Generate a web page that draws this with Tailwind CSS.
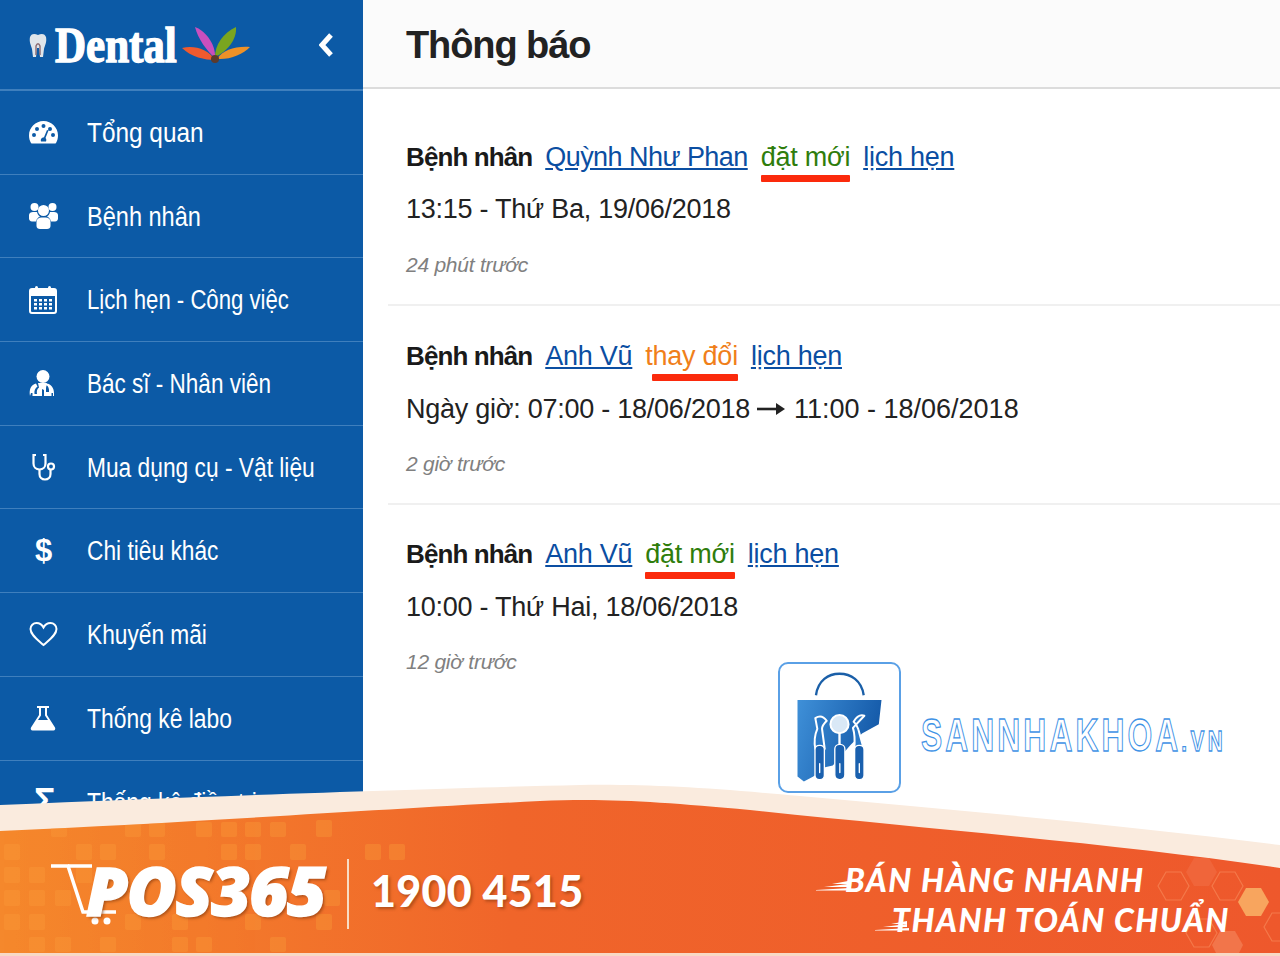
<!DOCTYPE html>
<html lang="vi">
<head>
<meta charset="utf-8">
<title>Thông báo</title>
<script src="https://cdn.jsdelivr.net/npm/@tailwindcss/browser@4"></script>
</head>
<body class="font-['Liberation_Sans',Arial,sans-serif]">
<div class="relative flex h-[956px] w-[1280px] overflow-hidden bg-white">
  <aside class="w-[363px] shrink-0 bg-[#0c5aa6] text-white">
    <div class="flex h-[91px] items-center border-b-2 border-[#3f7fbd] pl-[28px] pr-[28px]">
      <svg class="h-[28px] w-[20px]" viewBox="0 0 20 28"><path d="M2 6c2-4 5-3 8-2 3-1 6-2 8 2 1 5-1 8-2 12l-1 8h-3l-1-9H9l-1 9H5l-1-8C3 14 1 11 2 6z" fill="#dfe5ea"/><path d="M8 24v-9c1-3 3-3 4 0v9" fill="none" stroke="#8a6a70" stroke-width="1.400"/></svg>
      <span class="ml-[7px] inline-block w-[120px] origin-left scale-x-[0.86] whitespace-nowrap font-['Liberation_Serif',serif] text-[50px] font-bold leading-none [-webkit-text-stroke:1.400px_white]">Dental</span>
      <svg class="ml-[4px] h-[44px] w-[72px]" viewBox="0 0 72 44">
        <path d="M36 37C26 37 12 34 3 25c12-3 26 1 33 12z" fill="#ef5a2e"/>
        <path d="M36 35C28 28 19 16 16 4c9 3 21 16 20 31z" fill="#c94fbe"/>
        <path d="M36 34C36 22 44 10 57 4c1 12-8 24-21 30z" fill="#7aa51f"/>
        <path d="M38 36C44 27 56 23 71 24c-7 7-20 13-33 12z" fill="#ee9127"/>
        <circle cx="36" cy="36" r="4" fill="#5c3a2c"/>
      </svg>
      <svg class="ml-auto h-[26px] w-[16px]" viewBox="0 0 16 26"><path d="M12 3 3 13l9 10" fill="none" stroke="white" stroke-width="5"/></svg>
    </div>
    <nav class="text-[27px] leading-none">
      <a class="flex h-[83.7px] items-center border-b border-[#3f7fbd] pl-[29px]"><span class="flex w-[58px] shrink-0"><svg class="h-[26px] w-[29px]" viewBox="0 0 29 26"><path fill-rule="evenodd" d="M14.500 2C6.500 2 0 8.500 0 16.500c0 2.700.7 5.200 2 7.400.3.500.8.600 1.300.600h22.400c.5 0 1-.1 1.300-.6 1.300-2.200 2-4.700 2-7.400C29 8.500 22.500 2 14.500 2zm0 3a2 2 0 1 1 0 4 2 2 0 0 1 0-4zM8 8a2 2 0 1 1 0 4 2 2 0 0 1 0-4zm13 0a2 2 0 1 1 0 4 2 2 0 0 1 0-4zM5 14a2 2 0 1 1 0 4 2 2 0 0 1 0-4zm19 0a2 2 0 1 1 0 4 2 2 0 0 1 0-4zm-6-3 1.500.6-3 7.400c1 1 1 2.300.5 3.500h-5c-.8-2 .3-4 3-4.200z" fill="white"/></svg></span><span class="origin-left scale-x-[0.903] whitespace-nowrap pt-[2px]">Tổng quan</span></a>
      <a class="flex h-[83.7px] items-center border-b border-[#3f7fbd] pl-[29px]"><span class="flex w-[58px] shrink-0"><svg class="h-[30px] w-[29px]" viewBox="0 0 29 30" fill="white"><circle cx="5.500" cy="6" r="4"/><circle cx="23.500" cy="6" r="4"/><circle cx="14.500" cy="9.500" r="5.500"/><path d="M0 14c0-2 2-3 4-3h4c.500 2 1.500 3.500 3 4.500-2 1-3.500 2.500-4 5H3c-2 0-3-1.500-3-3zM29 14c0-2-2-3-4-3h-4c-.5 2-1.500 3.500-3 4.500 2 1 3.500 2.500 4 5h4c2 0 3-1.500 3-3zM7.500 21c0-3 2-4.500 5-4.500h4c3 0 5 1.500 5 4.500v4c0 2-1.500 3-3.500 3h-7c-2 0-3.500-1-3.500-3z"/></svg></span><span class="origin-left scale-x-[0.872] whitespace-nowrap pt-[2px]">Bệnh nhân</span></a>
      <a class="flex h-[83.7px] items-center border-b border-[#3f7fbd] pl-[29px]"><span class="flex w-[58px] shrink-0"><svg class="h-[29px] w-[28px]" viewBox="0 0 28 29"><rect x="1" y="4" width="26" height="24" rx="2" fill="none" stroke="white" stroke-width="2"/><path d="M1 5h26v6H1z" fill="white"/><rect x="6" y="1" width="3" height="6" rx="1.500" fill="white"/><rect x="19" y="1" width="3" height="6" rx="1.500" fill="white"/><path d="M5 14h3v2.500H5zM10 14h3v2.500h-3zM15 14h3v2.500h-3zM20 14h3v2.500h-3zM5 18h3v2.500H5zM10 18h3v2.500h-3zM15 18h3v2.500h-3zM20 18h3v2.500h-3zM5 22h3v2.500H5zM10 22h3v2.500h-3zM15 22h3v2.500h-3zM20 22h3v2.500h-3z" fill="white"/></svg></span><span class="origin-left scale-x-[0.82] whitespace-nowrap pt-[2px]">Lịch hẹn - Công việc</span></a>
      <a class="flex h-[83.7px] items-center border-b border-[#3f7fbd] pl-[29px]"><span class="flex w-[58px] shrink-0"><svg class="h-[27px] w-[27px]" viewBox="0 0 27 27" fill="white"><circle cx="14" cy="6.500" r="6.500"/><path d="M1 26c-1-6 .5-11 6-12.500l1.500 3C6 18 5 21 5.500 24H8c-.5-3 0-5 2-6.500L9 13h9l-1 5v4h3c.3-3-.5-6-3-7l1.500-1.500c5 1.500 7 6 6.500 12.500H24v-3h-1.500v3H15V20l-2-1v7H3.500v-3H2z"/></svg></span><span class="origin-left scale-x-[0.834] whitespace-nowrap pt-[2px]">Bác sĩ - Nhân viên</span></a>
      <a class="flex h-[83.7px] items-center border-b border-[#3f7fbd] pl-[29px]"><span class="flex w-[58px] shrink-0 pl-[2px]"><svg class="h-[28px] w-[25px]" viewBox="0 0 25 28" fill="none" stroke="white" stroke-width="2.200"><path d="M5 2H2.500v8.500c0 3.500 2.500 6 6 6s6-2.500 6-6V2H12"/><path d="M8.500 16.500V21c0 3.200 2.300 5.500 5.500 5.500s5.500-2.300 5.500-5.500v-4"/><circle cx="20" cy="13.500" r="3"/></svg></span><span class="origin-left scale-x-[0.843] whitespace-nowrap pt-[2px]">Mua dụng cụ - Vật liệu</span></a>
      <a class="flex h-[83.7px] items-center border-b border-[#3f7fbd] pl-[29px]"><span class="flex w-[58px] shrink-0 pl-[6px] text-[31px] font-bold leading-none">$</span><span class="origin-left scale-x-[0.842] whitespace-nowrap pt-[2px]">Chi tiêu khác</span></a>
      <a class="flex h-[83.7px] items-center border-b border-[#3f7fbd] pl-[29px]"><span class="flex w-[58px] shrink-0"><svg class="h-[26px] w-[29px]" viewBox="0 0 29 26"><path d="M14.500 24C9 19 1.500 14 1.500 8c0-3.500 2.800-6 6-6 3 0 5.500 1.700 7 4.500C16 3.700 18.500 2 21.500 2c3.200 0 6 2.500 6 6 0 6-7.500 11-13 16z" fill="none" stroke="white" stroke-width="2"/></svg></span><span class="origin-left scale-x-[0.841] whitespace-nowrap pt-[2px]">Khuyến mãi</span></a>
      <a class="flex h-[83.7px] items-center border-b border-[#3f7fbd] pl-[29px]"><span class="flex w-[58px] shrink-0 pl-[1px]"><svg class="h-[26px] w-[26px]" viewBox="0 0 26 26"><path d="M7 1h12v2h-2v7l8 12.500c.7 1.500 0 3-1.500 3h-21c-1.500 0-2.200-1.500-1.500-3L9 10V3H7z" fill="white"/><path d="M11 3h4v7.600L18 15H8l3-4.400z" fill="#0c5aa6"/></svg></span><span class="origin-left scale-x-[0.847] whitespace-nowrap pt-[2px]">Thống kê labo</span></a>
      <a class="flex h-[83.7px] items-center pl-[29px]"><span class="flex w-[58px] shrink-0 pl-[5px] text-[36px] font-bold leading-none">Σ</span><span class="origin-left scale-x-[0.845] whitespace-nowrap pt-[2px]">Thống kê điều trị</span></a>
    </nav>
  </aside>

  <main class="min-w-0 flex-1">
    <header class="flex h-[89px] items-center border-b-2 border-[#dcdcdc] bg-[#fbfbfb] pl-[43px] pt-[2px]">
      <h1 class="text-[38px] font-bold leading-none tracking-[-1.1px] text-[#222222]">Thông báo</h1>
    </header>
    <div class="ml-[25px] text-[27px] leading-[40px] tracking-[-0.25px] text-[#222222]">
      <section class="h-[217px] border-b-2 border-[#f0f0f0] pl-[18px] pt-[48px]">
        <div class="flex gap-[13px]"><b class="text-[26px] font-bold tracking-[-0.9px] text-[#1a1a1a]">Bệnh nhân</b><a class="tracking-[-0.55px] text-[#0b4ea2] underline">Quỳnh Như Phan</a><span class="relative text-[#2f7d0c]">đặt mới<i class="absolute bottom-[-5px] left-0 h-[7px] w-full rounded-[1px] bg-[#fb2a0c]"></i></span><a class="text-[#0b4ea2] underline">lịch hẹn</a></div>
        <p class="mt-[12px]">13:15 - Thứ Ba, 19/06/2018</p>
        <p class="mt-[16px] text-[21px] italic tracking-[-0.25px] text-[#808080]">24 phút trước</p>
      </section>
      <section class="h-[199px] border-b-2 border-[#f0f0f0] pl-[18px] pt-[30px]">
        <div class="flex gap-[13px]"><b class="text-[26px] font-bold tracking-[-0.9px] text-[#1a1a1a]">Bệnh nhân</b><a class="text-[#0b4ea2] underline">Anh Vũ</a><span class="relative text-[#f07f1a]">thay đổi<i class="absolute bottom-[-5px] left-[7px] right-0 h-[7px] rounded-[1px] bg-[#fb2a0c]"></i></span><a class="text-[#0b4ea2] underline">lịch hẹn</a></div>
        <p class="mt-[13px] flex items-center whitespace-pre">Ngày giờ: 07:00 - 18/06/2018<svg class="ml-[7px] mr-[9px] h-[14px] w-[28px]" viewBox="0 0 28 14"><path d="M0 7h24" stroke="#222222" stroke-width="2.600"/><path d="M19 1l9 6-9 6z" fill="#222222"/></svg><span class="tracking-[0px]">11:00 - 18/06/2018</span></p>
        <p class="mt-[15px] text-[21px] italic tracking-[-0.25px] text-[#808080]">2 giờ trước</p>
      </section>
      <section class="pl-[18px] pt-[29px]">
        <div class="flex gap-[13px]"><b class="text-[26px] font-bold tracking-[-0.9px] text-[#1a1a1a]">Bệnh nhân</b><a class="text-[#0b4ea2] underline">Anh Vũ</a><span class="relative text-[#2f7d0c]">đặt mới<i class="absolute bottom-[-5px] left-0 h-[7px] w-full rounded-[1px] bg-[#fb2a0c]"></i></span><a class="text-[#0b4ea2] underline">lịch hẹn</a></div>
        <p class="mt-[13px]">10:00 - Thứ Hai, 18/06/2018</p>
        <p class="mt-[15px] text-[21px] italic tracking-[-0.25px] text-[#808080]">12 giờ trước</p>
      </section>
    </div>
  </main>

  <!-- watermark -->
  <div class="absolute left-[778px] top-[662px] flex items-center">
    <div class="h-[131px] w-[123px] rounded-[10px] border-2 border-[#5aa0e6] bg-white">
      <svg class="h-full w-full" viewBox="61 43 354 378">
        <defs><linearGradient id="bag" x1="0" y1="0" x2="1" y2="0.300"><stop offset="0" stop-color="#3f90d8"/><stop offset="1" stop-color="#1459a8"/></linearGradient></defs>
        <path d="M168 136C174 92 205 72 238 72s66 20 72 64" fill="none" stroke="#1a5fa8" stroke-width="7"/>
        <path d="M113 150H363L355 222 305 250 270 285 218 345 195 350 160 378 132 393 113 378z" fill="url(#bag)"/>
        <g fill="#2a78c6" stroke="white" stroke-width="6" stroke-linejoin="round">
          <path d="M166 204c12-8 24-6 34 8-8 8-14 14-14 24l8 60h-28c-4-22-2-42 6-60z"/>
          <path d="M312 197c-12-4-24 4-32 18 8 6 12 14 14 22l16 58h-28c2-22 2-42-4-62z"/>
        </g>
        <path d="M238 250v40" stroke="white" stroke-width="7"/>
        <circle cx="238" cy="222" r="27" fill="#d9e8f6" stroke="white" stroke-width="6"/>
        <g fill="#1a60ae" stroke="white" stroke-width="4">
          <rect x="165" y="285" width="28" height="102" rx="13"/>
          <rect x="224" y="282" width="30" height="105" rx="14"/>
          <rect x="283" y="285" width="28" height="102" rx="13"/>
        </g>
        <path d="M179 340v26M239 340v26M297 340v26" stroke="white" stroke-width="4" stroke-linecap="round"/>
      </svg>
    </div>
    <span class="ml-[20px] mt-[14px] inline-block origin-left scale-x-[0.69] whitespace-nowrap text-[46px] font-bold leading-none tracking-[4.500px] text-white [-webkit-text-stroke:1.300px_#3f93e6]">SANNHAKHOA<span class="text-[30px] tracking-[5px]">.VN</span></span>
  </div>

  <!-- promo banner -->
  <div class="absolute inset-x-0 bottom-0 h-[176px]">
    <svg class="absolute inset-0 h-full w-full" viewBox="0 0 1280 176" preserveAspectRatio="none">
      <defs>
        <linearGradient id="org" x1="0" y1="0" x2="1" y2="0"><stop offset="0" stop-color="#f5882c"/><stop offset=".4" stop-color="#f0652a"/><stop offset="1" stop-color="#ee582c"/></linearGradient>
        <clipPath id="orgclip"><path d="M0 51C200 42 400 28 540 21c70-3 120 1 210 9 190 20 370 34 530 58v85H0z"/></clipPath>
      </defs>
      <path d="M0 25C220 16 440 8 580 5c70-1 130 3 220 11 170 15 330 30 480 49v111H0z" fill="#faebde"/>
      <path d="M0 51C200 42 400 28 540 21c70-3 120 1 210 9 190 20 370 34 530 58v85H0z" fill="url(#org)"/>
      <g fill="#f99a38" opacity=".4" clip-path="url(#orgclip)">
        <rect x="51" y="42" width="16" height="15" rx="2"/><rect x="125" y="42" width="16" height="15" rx="2"/><rect x="149" y="42" width="16" height="15" rx="2"/><rect x="196" y="42" width="16" height="15" rx="2"/><rect x="221" y="42" width="16" height="15" rx="2"/><rect x="245" y="42" width="16" height="15" rx="2"/><rect x="270" y="42" width="16" height="15" rx="2"/><rect x="316" y="40" width="16" height="17" rx="2"/>
        <rect x="4" y="64" width="16" height="16" rx="2"/><rect x="76" y="64" width="16" height="16" rx="2"/><rect x="100" y="64" width="16" height="16" rx="2"/><rect x="149" y="64" width="16" height="16" rx="2"/><rect x="221" y="64" width="16" height="16" rx="2"/><rect x="245" y="64" width="16" height="16" rx="2"/><rect x="290" y="64" width="16" height="16" rx="2"/><rect x="365" y="64" width="16" height="16" rx="2"/><rect x="389" y="64" width="16" height="16" rx="2"/>
        <rect x="4" y="87" width="16" height="16" rx="2"/><rect x="29" y="87" width="16" height="16" rx="2"/><rect x="76" y="87" width="16" height="16" rx="2"/>
        <rect x="4" y="110" width="16" height="16" rx="2"/><rect x="29" y="110" width="16" height="16" rx="2"/><rect x="55" y="110" width="16" height="16" rx="2"/><rect x="324" y="110" width="16" height="16" rx="2"/>
        <rect x="4" y="134" width="16" height="16" rx="2"/><rect x="29" y="134" width="16" height="16" rx="2"/><rect x="125" y="134" width="16" height="16" rx="2"/><rect x="172" y="134" width="16" height="16" rx="2"/><rect x="245" y="134" width="16" height="16" rx="2"/><rect x="316" y="134" width="16" height="16" rx="2"/>
        <rect x="29" y="157" width="16" height="15" rx="2"/><rect x="55" y="157" width="16" height="15" rx="2"/><rect x="100" y="157" width="16" height="15" rx="2"/><rect x="172" y="157" width="16" height="15" rx="2"/><rect x="196" y="157" width="16" height="15" rx="2"/><rect x="270" y="157" width="16" height="15" rx="2"/>
      </g>
      <g fill="none" stroke="#f4794a" stroke-width="1.200">
        <path d="M1158 106l8-14h15l8 14-8 14h-15zM1212 106l8-14h15l8 14-8 14h-15zM1186 153l8-14h15l8 14-8 14h-15zM1264 147l8-14h15l8 14-8 14h-15z"/>
      </g>
      <path d="M1186 92l8-14h15l8 14-8 14h-15z" fill="#f0653a"/>
      <path d="M1238 122l8-14h15l8 14-8 14h-15z" fill="#f8a55e"/>
      <path d="M1212 165l8-14h15l8 14-4 8h-23z" fill="#f2754a"/>
      <rect x="0" y="173" width="1280" height="3" fill="#f8d9c6"/>
      <rect x="347" y="79" width="2" height="70" fill="#f8dcc4"/>
    </svg>
    <svg class="absolute left-[50px] top-[83px] h-[62px] w-[68px]" viewBox="0 0 68 62" fill="none" stroke="white" stroke-width="3.500">
      <path d="M1 3h17l15 46h33"/><path d="M18 3h24"/>
      <circle cx="45" cy="58" r="3.500" fill="white" stroke="none"/><circle cx="57" cy="58" r="3.500" fill="white" stroke="none"/>
    </svg>
    <span class="absolute left-[86px] top-[76px] font-['Open_Sans','Liberation_Sans',sans-serif] text-[68px] font-extrabold italic leading-none tracking-[-1.500px] text-white [-webkit-text-stroke:1.500px_white] [text-shadow:2px_2px_3px_rgba(120,50,10,0.6)]">POS365</span>
    <span class="absolute left-[371px] top-[89px] font-['Lato','Liberation_Sans',sans-serif] text-[43px] font-black leading-none tracking-[0.300px] text-white [text-shadow:2px_2px_3px_rgba(120,50,10,0.5)]">1900 4515</span>
    <span class="absolute left-[845px] top-[84px] font-['Lato','Liberation_Sans',sans-serif] text-[32px] font-black italic leading-none tracking-[1.450px] text-white">BÁN HÀNG NHANH</span>
    <span class="absolute left-[892px] top-[124px] font-['Lato','Liberation_Sans',sans-serif] text-[32px] font-black italic leading-none tracking-[1.450px] text-white">THANH TOÁN CHUẨN</span>
    <svg class="absolute left-[816px] top-[100px] h-[11px] w-[34px]" viewBox="0 0 34 11" fill="white"><path d="M0 10 34 8v2.500H0zM8 7l24-3v3zM16 4l16-3v3z"/></svg>
    <svg class="absolute left-[875px] top-[140px] h-[11px] w-[34px]" viewBox="0 0 34 11" fill="white"><path d="M0 10 34 8v2.500H0zM8 7l24-3v3zM16 4l16-3v3z"/></svg>
  </div>
</div>
</body>
</html>
